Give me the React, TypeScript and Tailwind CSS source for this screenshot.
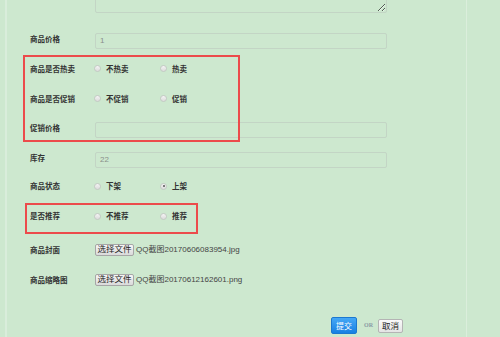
import React from "react";

const cjk = "font-['Noto_Sans_CJK_SC','Noto_Sans',sans-serif]";
const latin = "font-['Liberation_Sans','Noto_Sans_CJK_SC',sans-serif]";

type Opt = { label: string; checked?: boolean };

function Radio({ checked }: { checked?: boolean }) {
  return (
    <span className="flex h-[7px] w-[7px] items-center justify-center rounded-full border border-[#c4c9c4] bg-gradient-to-b from-[#f4f4f4] to-[#dcdcdc]">
      {checked && <span className="h-[2px] w-[2px] rounded-full bg-[#555]" />}
    </span>
  );
}

function Label({ text, up }: { text: string; up?: boolean }) {
  return (
    <div className={`w-[65px] shrink-0 text-[7.5px] font-bold text-[#333] ${up ? "mb-[4px]" : ""}`}>
      {text}
    </div>
  );
}

function RadioRow({ label, options, h }: { label: string; options: Opt[]; h: string }) {
  return (
    <div className={`flex items-center ${h}`}>
      <Label text={label} />
      <div className="-ml-[1px] flex items-center">
        {options.map((o) => (
          <div key={o.label} className="flex w-[66px] items-center gap-[5px]">
            <Radio checked={o.checked} />
            <span className="text-[7.5px] font-bold text-[#333]">{o.label}</span>
          </div>
        ))}
      </div>
    </div>
  );
}

function InputRow({ label, value, h }: { label: string; value: string; h: string }) {
  return (
    <div className={`flex items-center ${h}`}>
      <Label text={label} up />
      <div className={`flex h-[16px] w-[292px] items-center rounded-[2px] border border-[#c3d5c5] pl-[4px] text-[8px] text-[#8a8f8a] ${latin}`}>
        {value}
      </div>
    </div>
  );
}

function FileRow({ label, file, h }: { label: string; file: string; h: string }) {
  return (
    <div className={`flex items-center ${h}`}>
      <Label text={label} />
      <div className={`flex items-center gap-[2px] ${latin}`}>
        <button className="flex h-[12px] w-[39px] items-center justify-center rounded-[2px] border border-[#a6a6a6] bg-gradient-to-b from-[#f6f6f6] to-[#dadada] text-[8.5px] leading-none text-[#222]">
          选择文件
        </button>
        <span className="text-[8px] text-[#444]">{file}</span>
      </div>
    </div>
  );
}

export default function App() {
  return (
    <div className={`flex h-[337px] w-[500px] overflow-hidden bg-[#cde8cf] ${cjk}`}>
      <div className="w-[5px] shrink-0" />
      <div className="w-[2px] shrink-0 bg-[#d9eddb]" />
      <div className="w-[459px] shrink-0 pl-[23px]">
        {/* 商品描述 textarea 底部 */}
        <div className="flex">
          <div className="w-[65px] shrink-0" />
          <textarea
            readOnly
            className="-mt-[27px] h-[40px] w-[292px] rounded-[2px] border border-[#c3d5c5] bg-transparent outline-none"
          />
        </div>

        <div className="mt-[14px]">
          <InputRow label="商品价格" value="1" h="h-[27px]" />
        </div>

        <div className="relative">
          <RadioRow
            label="商品是否热卖"
            options={[{ label: "不热卖" }, { label: "热卖" }]}
            h="h-[29px]"
          />
          <RadioRow
            label="商品是否促销"
            options={[{ label: "不促销" }, { label: "促销" }]}
            h="h-[31px]"
          />
          <InputRow label="促销价格" value="" h="h-[31px]" />
          <div className="pointer-events-none absolute -left-[7px] top-[1px] h-[87px] w-[217px] border-2 border-[#ec4b4b]" />
        </div>

        <InputRow label="库存" value="22" h="h-[30px]" />
        <RadioRow
          label="商品状态"
          options={[{ label: "下架" }, { label: "上架", checked: true }]}
          h="h-[22px]"
        />

        <div className="relative">
          <RadioRow
            label="是否推荐"
            options={[{ label: "不推荐" }, { label: "推荐" }]}
            h="h-[38px]"
          />
          <div className="pointer-events-none absolute -left-[5px] top-[6px] h-[31px] w-[173px] border-2 border-[#ec4b4b]" />
        </div>

        <FileRow label="商品封面" file="QQ截图20170606083954.jpg" h="h-[29px]" />
        <FileRow label="商品缩略图" file="QQ截图20170612162601.png" h="h-[31px]" />

        <div className="mt-[22px] flex items-center pl-[301px]">
          <button className="flex h-[17px] w-[26px] items-center justify-center rounded-[2px] border border-[#1c78d0] bg-gradient-to-b from-[#45a8f5] to-[#1580e3] text-[8px] text-white">
            提交
          </button>
          <span className="ml-[7px] mr-[5px] font-['Liberation_Serif',serif] text-[6px] font-bold text-[#8a9aa4]">
            OR
          </span>
          <button className="flex h-[14px] w-[25px] items-center justify-center rounded-[2px] border border-[#b4b4b4] bg-gradient-to-b from-[#fafafa] to-[#e4e4e4] text-[8.5px] text-[#222]">
            取消
          </button>
        </div>
      </div>
      <div className="w-[1px] shrink-0 bg-[#dbeedc]" />
    </div>
  );
}
